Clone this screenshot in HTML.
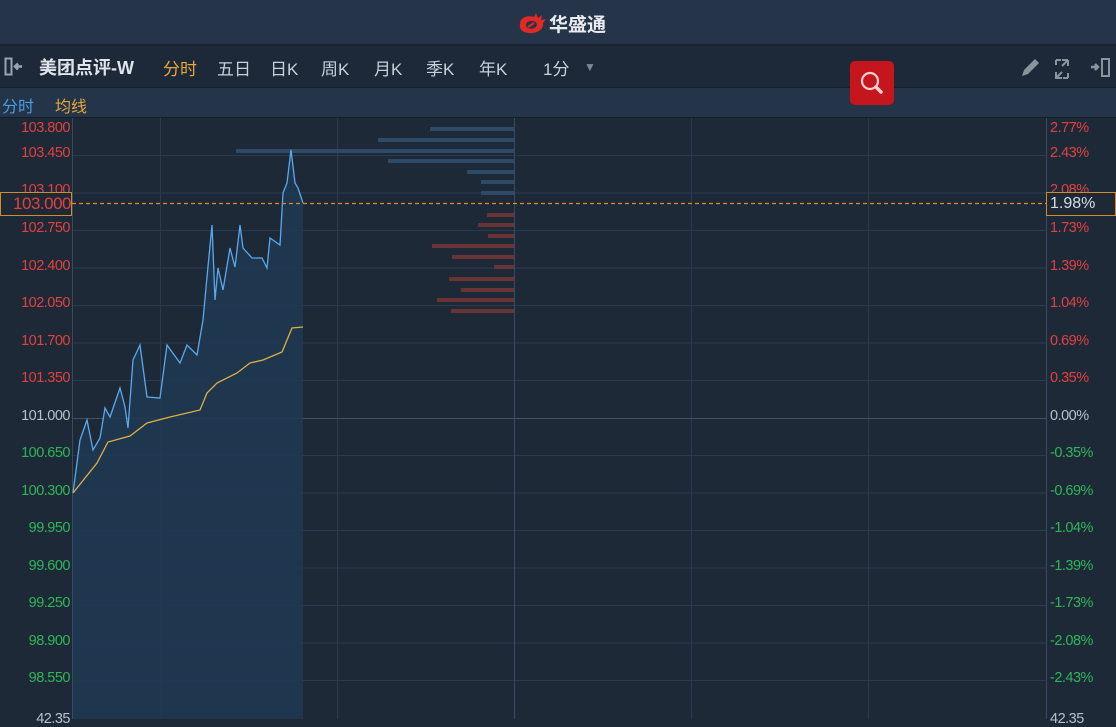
<!DOCTYPE html>
<html><head><meta charset="utf-8"><style>
body{margin:0;width:1116px;height:719px;overflow:hidden;background:#1e2938;font-family:"Liberation Sans","Noto Sans CJK SC",sans-serif;position:relative}
.top{position:absolute;left:0;top:0;width:1116px;height:44px;background:#253449;border-bottom:2px solid #172130}
.tb{position:absolute;left:0;top:46px;width:1116px;height:41px;background:#1d2838;border-bottom:2px solid #151e2b}
.sb{position:absolute;left:0;top:88px;width:1116px;height:29px;background:#243449;border-bottom:1px solid #151e2b}
.t{position:absolute;white-space:nowrap}
.tab{position:absolute;top:55px;font-size:17px;color:#c8d0da}
.lab{position:absolute;font-size:14.5px;left:0;width:70px;text-align:right;letter-spacing:-0.5px}
.rl{position:absolute;font-size:14.5px;left:1050px;letter-spacing:-0.5px}
.r{color:#e0413f}.g{color:#2fb559}.w{color:#b8c0ca}
</style></head><body>
<div class="top"></div>
<svg class="t" style="left:516px;top:12px" width="32" height="24" viewBox="0 0 32 24"><path d="M4 12 C4 5 12 3 18 5 L20 1 L22 6 L26 3 L25 8 L30 7 L27 11 C28 18 20 22 12 21 C6 20 3 17 4 12 Z M10 13 C10 17 16 18 20 15 C22 12 20 9 16 9 C13 9 10 10 10 13 Z" fill="#e02a26"/><path d="M12 15 L18 11" stroke="#e02a26" stroke-width="2"/></svg>
<div class="t" style="left:549px;top:10px;font-size:19px;font-weight:bold;color:#e8ecf0">华盛通</div>
<div class="tb"></div>
<svg class="t" style="left:4px;top:57px" width="26" height="20"><rect x="1.5" y="1.5" width="6" height="16" fill="none" stroke="#9aa4b0" stroke-width="2"/><path d="M11 9.5 H18 M14 6.5 L11 9.5 L14 12.5" stroke="#9aa4b0" stroke-width="2.5" fill="none"/></svg>
<div class="tab" style="left:39px;font-weight:bold;color:#dfe4ea;font-size:18px;top:54px">美团点评-W</div>
<div class="tab" style="left:163px;color:#e7a73a">分时</div>
<div class="tab" style="left:217px">五日</div>
<div class="tab" style="left:270px">日K</div>
<div class="tab" style="left:321px">周K</div>
<div class="tab" style="left:374px">月K</div>
<div class="tab" style="left:426px">季K</div>
<div class="tab" style="left:479px">年K</div>
<div class="tab" style="left:543px">1分</div>
<div class="t" style="left:584px;top:60px;font-size:12px;color:#7f8894">▼</div>
<div class="t" style="left:850px;top:61px;width:44px;height:44px;background:#c4161c;border-radius:5px;z-index:3"><svg width="44" height="44"><circle cx="20" cy="20" r="8" fill="none" stroke="#f0d0d0" stroke-width="2.2"/><path d="M26 26 L31 31" stroke="#f0d0d0" stroke-width="3.5" stroke-linecap="round"/></svg></div>
<svg class="t" style="left:1018px;top:56px" width="98" height="24"><path d="M4 20 L6 14 L17 3 L21 7 L10 18 Z" fill="#8a939e"/><g stroke="#8a939e" stroke-width="2" fill="none"><path d="M44 4 H50 M50 4 V10 M44 22 H38 V16 M38 4 V9 M38 4 H43 M50 22 V17 M50 22 H45"/><path d="M49 5 L44 10 M39 21 L44 16"/></g><path d="M73 11 H80 M77 8 L80 11 L77 14" stroke="#8a939e" stroke-width="2.5" fill="none"/><rect x="84" y="3" width="7" height="17" fill="none" stroke="#8a939e" stroke-width="2"/></svg>
<div class="sb"></div>
<div class="t" style="left:2px;top:93px;font-size:16px;color:#4c9be0">分时</div>
<div class="t" style="left:55px;top:93px;font-size:16px;color:#e4a63a">均线</div>
<svg class="t" style="left:0;top:118px" width="1116" height="601" viewBox="0 118 1116 601">
<g stroke="#2b3a50" stroke-width="1">
<path d="M72 155.5H1046M72 193H1046M72 230.5H1046M72 268H1046M72 305.5H1046M72 343H1046M72 380.5H1046M72 455.5H1046M72 493H1046M72 530.5H1046M72 568H1046M72 605.5H1046M72 643H1046M72 680.5H1046"/>
<path d="M160.5 118V719M337.5 118V719M691.5 118V719M868.5 118V719"/>
</g>
<path d="M72 418.5H1046" stroke="#3f5068"/>
<path d="M72.5 118V719M1046.5 118V719M514.5 118V719" stroke="#3a4a60"/>
<g fill="#2d4a68">
<rect x="430" y="127" width="84" height="4"/><rect x="378" y="138" width="136" height="4"/><rect x="236" y="149" width="278" height="4"/><rect x="388" y="159" width="126" height="4"/><rect x="467" y="170" width="47" height="4"/><rect x="481" y="180" width="33" height="4"/><rect x="481" y="191" width="33" height="4"/></g>
<g fill="#6a3336">
<rect x="487" y="213" width="27" height="4"/><rect x="478" y="223" width="36" height="4"/><rect x="488" y="234" width="26" height="4"/><rect x="432" y="244" width="82" height="4"/><rect x="452" y="255" width="62" height="4"/><rect x="494" y="265" width="20" height="4"/><rect x="449" y="277" width="65" height="4"/><rect x="461" y="288" width="53" height="4"/><rect x="437" y="298" width="77" height="4"/><rect x="451" y="309" width="63" height="4"/></g>
<path d="M73 493 L80 440 L87 420 L93 450 L100 438 L105 408 L110 417 L120 388 L125 407 L128 428 L133 360 L140 345 L147 397 L160 398 L167 345 L180 363 L187 345 L197 355 L203 320 L207 277 L212 225 L215 300 L218 268 L223 290 L230 248 L235 267 L240 225 L243 248 L252 258 L262 258 L267 268 L270 238 L280 245 L283 193 L287 183 L291 150 L295 183 L298 188 L303 203 L303 719 L73 719 Z" fill="#1f3852" opacity="0.85"/>
<path d="M73 493 L80 440 L87 420 L93 450 L100 438 L105 408 L110 417 L120 388 L125 407 L128 428 L133 360 L140 345 L147 397 L160 398 L167 345 L180 363 L187 345 L197 355 L203 320 L207 277 L212 225 L215 300 L218 268 L223 290 L230 248 L235 267 L240 225 L243 248 L252 258 L262 258 L267 268 L270 238 L280 245 L283 193 L287 183 L291 150 L295 183 L298 188 L303 203" fill="none" stroke="#5aa9ec" stroke-width="1.3"/>
<path d="M73 493 L97 463 L108 442 L130 436 L147 423 L170 417 L200 410 L207 393 L217 383 L237 373 L250 363 L263 360 L282 352 L292 328 L303 327" fill="none" stroke="#e3ad45" stroke-width="1.3"/>
<path d="M72 203.5H1046" stroke="#e08a20" stroke-width="1.2" stroke-dasharray="4,3"/>
</svg>
<div class="lab r" style="top:120px">103.800</div>
<div class="lab r" style="top:145px">103.450</div>
<div class="lab r" style="top:182px;height:11px;overflow:hidden">103.100</div>
<div class="t" style="left:0;top:192px;width:72px;height:24px;border:1px solid #d38a2a;box-sizing:border-box;background:#1e2938;color:#e0413f;font-size:17px;line-height:22px;text-align:right;letter-spacing:-0.5px">103.000</div>
<div class="lab r" style="top:220px">102.750</div>
<div class="lab r" style="top:258px">102.400</div>
<div class="lab r" style="top:295px">102.050</div>
<div class="lab r" style="top:333px">101.700</div>
<div class="lab r" style="top:370px">101.350</div>
<div class="lab w" style="top:408px">101.000</div>
<div class="lab g" style="top:445px">100.650</div>
<div class="lab g" style="top:483px">100.300</div>
<div class="lab g" style="top:520px">99.950</div>
<div class="lab g" style="top:558px">99.600</div>
<div class="lab g" style="top:595px">99.250</div>
<div class="lab g" style="top:633px">98.900</div>
<div class="lab g" style="top:670px">98.550</div>
<div class="lab w" style="top:711px">42.35</div>
<div class="rl r" style="top:120px">2.77%</div>
<div class="rl r" style="top:145px">2.43%</div>
<div class="rl r" style="top:182px;height:11px;overflow:hidden">2.08%</div>
<div class="t" style="left:1046px;top:192px;width:70px;height:24px;border:1px solid #d38a2a;box-sizing:border-box;background:#1e2938;color:#d5dce4;font-size:16px;line-height:22px;padding-left:3px">1.98%</div>
<div class="rl r" style="top:220px">1.73%</div>
<div class="rl r" style="top:258px">1.39%</div>
<div class="rl r" style="top:295px">1.04%</div>
<div class="rl r" style="top:333px">0.69%</div>
<div class="rl r" style="top:370px">0.35%</div>
<div class="rl w" style="top:408px">0.00%</div>
<div class="rl g" style="top:445px">-0.35%</div>
<div class="rl g" style="top:483px">-0.69%</div>
<div class="rl g" style="top:520px">-1.04%</div>
<div class="rl g" style="top:558px">-1.39%</div>
<div class="rl g" style="top:595px">-1.73%</div>
<div class="rl g" style="top:633px">-2.08%</div>
<div class="rl g" style="top:670px">-2.43%</div>
<div class="rl w" style="top:711px">42.35</div>
</body></html>
